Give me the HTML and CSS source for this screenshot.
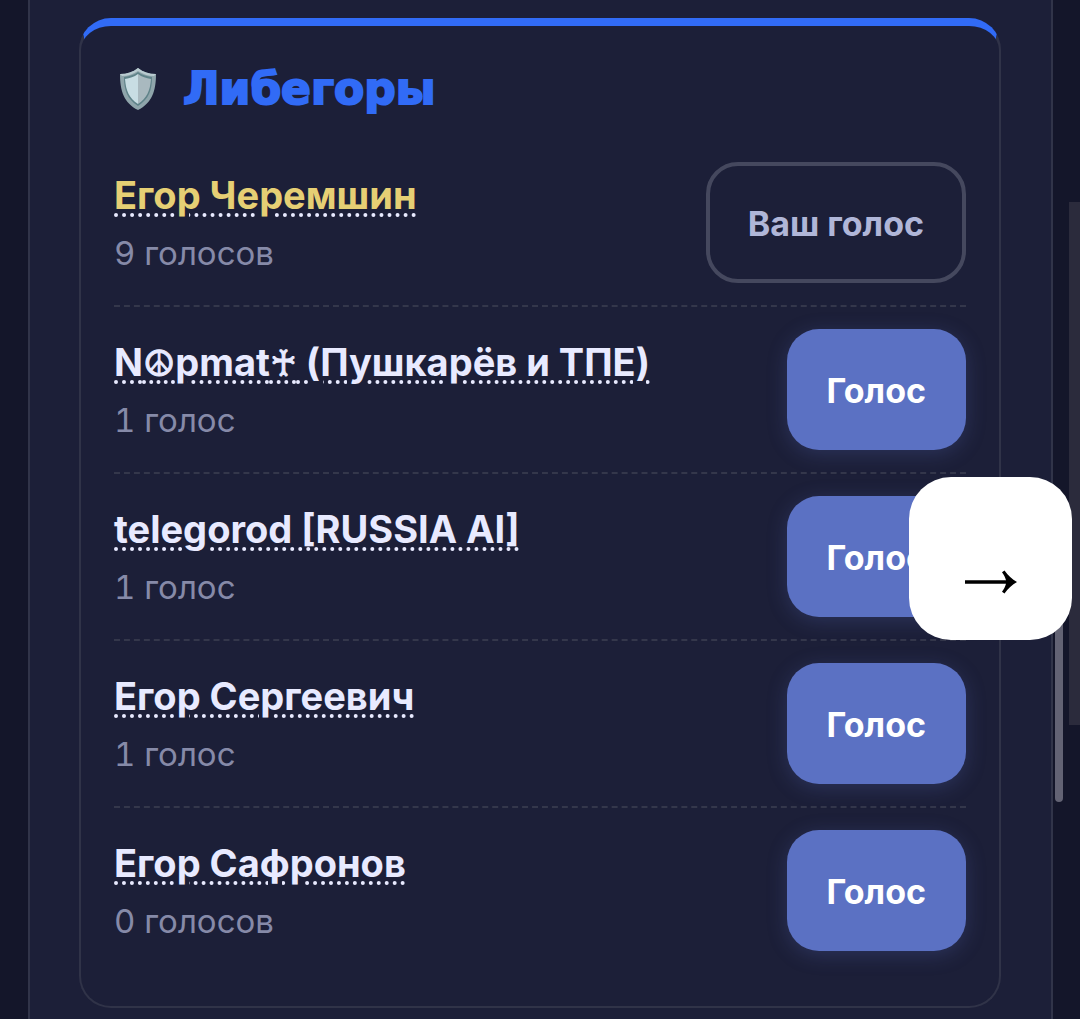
FILE: index.html
```html
<!DOCTYPE html>
<html lang="ru">

<head>
    <meta charset="UTF-8">
    <meta name="viewport" content="width=device-width, initial-scale=1.0">
    <title>Либегоры</title>
    <link rel="stylesheet" href="styles.css">
</head>

<body>
    <main class="panel">
        <section class="card">
            <h2 class="title">
                <svg class="shield" viewBox="0 0 38 44" aria-hidden="true">
                    <path fill="#8fa5ab" d="M19 1C14 5 8 7 1 7c0 17 4 29 18 36C33 36 37 24 37 7 30 7 24 5 19 1z" />
                    <path fill="#b9cbd0" d="M19 1C14 5 8 7 1 7l2 2c6 0 11-2 16-5 5 3 10 5 16 5l2-2C30 7 24 5 19 1z" />
                    <path fill="#5f8389" d="M19 5c-4 3-8 4-14 5 0 13 3 22 14 29 11-7 14-16 14-29-6-1-10-2-14-5z" />
                    <path fill="#c8dde3" d="M19 7c-4 3-8 4-13 5 1 12 4 19 13 25z" />
                    <path fill="#a9b9bf" d="M19 7c4 3 8 4 13 5-1 12-4 19-13 25z" />
                </svg>
                <span>Либегоры</span>
            </h2>
            <ul class="list">
                <li class="row">
                    <div class="info">
                        <a href="#" class="name"><span class="mine">Егор Черемшин</span></a>
                        <span class="count">9 голосов</span>
                    </div>
                    <button type="button" class="btn voted">Ваш голос</button>
                </li>
                <li class="row">
                    <div class="info">
                        <a href="#" class="name">N<span class="sign">☮</span>pmat<span class="sign">♰</span> (Пушкарёв и ТПЕ)</a>
                        <span class="count">1 голос</span>
                    </div>
                    <button type="button" class="btn">Голос</button>
                </li>
                <li class="row">
                    <div class="info">
                        <a href="#" class="name">telegorod [RUSSIA AI]</a>
                        <span class="count">1 голос</span>
                    </div>
                    <button type="button" class="btn">Голос</button>
                </li>
                <li class="row">
                    <div class="info">
                        <a href="#" class="name">Егор Сергеевич</a>
                        <span class="count">1 голос</span>
                    </div>
                    <button type="button" class="btn">Голос</button>
                </li>
                <li class="row">
                    <div class="info">
                        <a href="#" class="name">Егор Сафронов</a>
                        <span class="count">0 голосов</span>
                    </div>
                    <button type="button" class="btn">Голос</button>
                </li>
            </ul>
        </section>
    </main>
    <div class="side"></div>
    <div class="thumb"></div>
    <button type="button" class="next" aria-label="Дальше">
        <svg class="arrow" viewBox="0 0 54 24" aria-hidden="true">
            <path d="M1 10.200h41c-1-3-2-5.500-4-8l2.500-1.700c3.500 5 7.500 8.500 12.500 11.500-5 3-9 6.500-12.500 11.500L38 21.800c2-2.500 3-5 4-8H1z" />
        </svg>
    </button>
</body>

</html>
```

FILE: styles.css
```css
* {
    margin: 0;
    padding: 0;
    box-sizing: border-box;
}

body {
    background-color: #14162a;
    font-family: Inter, "DejaVu Sans", sans-serif;
    color: #e8eaff;
}

ul {
    list-style: none;
}

.panel {
    margin: 0 27px 0 28px;
    padding: 18px 50px 11px 49px;
    border: solid #313449;
    border-width: 0 2px;
    background-color: #1c1f38;
}

.card {
    padding: 33px;
    border: 2px solid #303348;
    border-top: 8px solid #316bf6;
    border-radius: 32px;
}

.title {
    display: flex;
    align-items: center;
    gap: 26px;
    margin-bottom: 22px;
    padding-left: 5px;
    font-family: "DejaVu Sans", sans-serif;
    font-size: 44px;
    font-weight: bold;
    line-height: 59px;
    color: #316bf6;
    -webkit-text-stroke: 2px #316bf6;
}

.shield {
    width: 38px;
    height: 44px;
}

.row {
    display: flex;
    align-items: center;
    justify-content: space-between;
    padding: 22px 0;
    border-bottom: 2px dashed #34374b;
}

.row:last-child {
    border-bottom: 0;
}

.info {
    display: flex;
    flex-direction: column;
    align-items: flex-start;
    padding-top: 2px;
    line-height: 58px;
}

.name {
    font-size: 38px;
    font-weight: 650;
    color: #e8eaff;
    text-decoration: underline dotted 4px;
    text-underline-offset: 5px;
}

.mine {
    color: #e6cf74;
}

.sign {
    font-family: "DejaVu Sans", sans-serif;
    font-size: 36px;
    line-height: 1;
    -webkit-text-stroke: 1px;
}

.count {
    font-size: 33px;
    font-variant-numeric: tabular-nums;
    color: #868aa8;
}

.btn {
    padding: 41px 40px 39px;
    border: 0;
    border-radius: 32px;
    background-color: #5b71c3;
    box-shadow: 0 4px 20px rgba(91, 113, 195, 0.25);
    font-family: inherit;
    font-size: 34px;
    font-weight: 700;
    line-height: 41px;
    color: #fff;
    cursor: pointer;
}

.voted {
    padding: 37px 38px 35px;
    border: 4px solid #45485e;
    background-color: transparent;
    box-shadow: none;
    color: #b0b6d8;
}

/* fixed things over the page */
.side {
    position: fixed;
    top: 202px;
    right: 0;
    width: 11px;
    height: 523px;
    background-color: #2b2b3c;
}

.thumb {
    position: fixed;
    top: 540px;
    right: 17px;
    width: 8px;
    height: 262px;
    border-radius: 4px;
    background-color: #636374;
}

.next {
    position: fixed;
    top: 477px;
    right: 8px;
    display: flex;
    align-items: center;
    justify-content: center;
    width: 163px;
    height: 163px;
    padding-top: 46px;
    border: 0;
    border-radius: 42px;
    background-color: #fff;
    cursor: pointer;
}

.arrow {
    width: 54px;
    height: 24px;
    fill: #000;
}
```
